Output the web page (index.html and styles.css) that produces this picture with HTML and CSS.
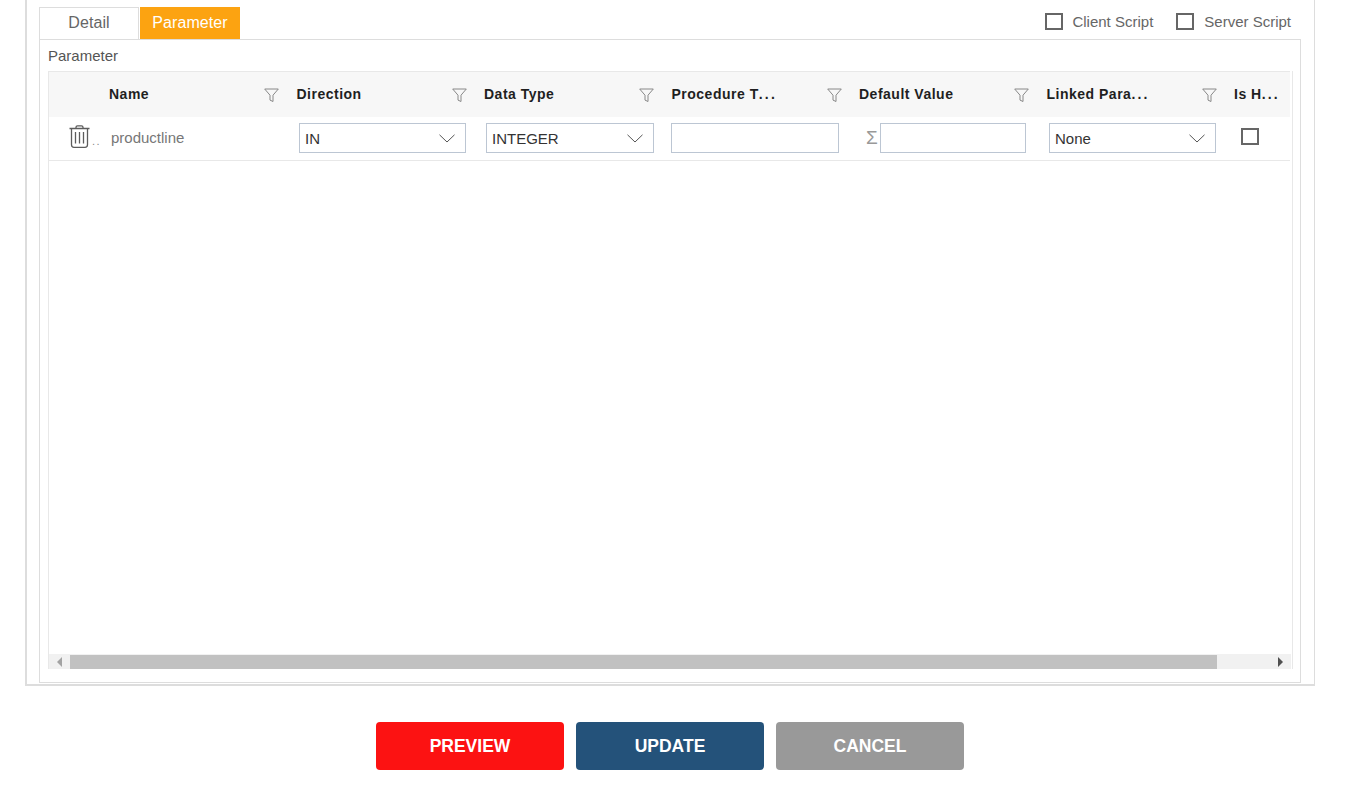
FILE: index.html
```html
<!DOCTYPE html>
<html lang="en">
  <head>
    <meta charset="utf-8">
    <title>Parameter</title>
    <link rel="stylesheet" href="styles.css">
  </head>
  <body>
    <div class='panel'>
        <div class='tabbar'>
            <div class='tab'>Detail</div>
            <div class='tab active'>Parameter</div>
            <div class='options'>
                <label class='option'><span class='check'></span>Client Script</label>
                <label class='option'><span class='check'></span>Server Script</label>
            </div>
        </div>
        <div class='tabbody'>
            <div class='caption'>Parameter</div>
            <div class='grid'>
                <div class='head'>
                    <div></div>
                    <div class='th'><span>Name</span><svg class='filter' viewBox='0 0 15 15'><path d='M.7 1h13.6L9 7.2v6.3l-3-1.4V7.2z'/></svg></div>
                    <div class='th'><span>Direction</span><svg class='filter' viewBox='0 0 15 15'><path d='M.7 1h13.6L9 7.2v6.3l-3-1.4V7.2z'/></svg></div>
                    <div class='th'><span>Data Type</span><svg class='filter' viewBox='0 0 15 15'><path d='M.7 1h13.6L9 7.2v6.3l-3-1.4V7.2z'/></svg></div>
                    <div class='th'><span>Procedure T<span class='more'>...</span></span><svg class='filter' viewBox='0 0 15 15'><path d='M.7 1h13.6L9 7.2v6.3l-3-1.4V7.2z'/></svg></div>
                    <div class='th'><span>Default Value</span><svg class='filter' viewBox='0 0 15 15'><path d='M.7 1h13.6L9 7.2v6.3l-3-1.4V7.2z'/></svg></div>
                    <div class='th'><span>Linked Para<span class='more'>...</span></span><svg class='filter' viewBox='0 0 15 15'><path d='M.7 1h13.6L9 7.2v6.3l-3-1.4V7.2z'/></svg></div>
                    <div class='th'><span>Is H<span class='more'>...</span></span></div>
                </div>
                <div class='row'>
                    <div class='td tools'>
                        <svg class='trash' viewBox='0 0 21 23'>
                            <path d='M.5 3.5h20M7 3.5V2.2C7 1.3 7.7.8 8.5.8h4c.8 0 1.5.5 1.5 1.4v1.3'/>
                            <path d='M2.5 3.5v16.3c0 1.5 1 2.5 2.5 2.5h11c1.5 0 2.5-1 2.5-2.5V3.5'/>
                            <path d='M6.5 7v11.5M10.5 7v11.5M14.5 7v11.5'/>
                        </svg>
                        <span class='dots'>..</span>
                    </div>
                    <div class='td name'>productline</div>
                    <div class='td'><div class='select'>IN<svg class='chevron' viewBox='0 0 16 9'><path d='M.5.8 8 8 15.5.8'/></svg></div></div>
                    <div class='td dtype'><div class='select'>INTEGER<svg class='chevron' viewBox='0 0 16 9'><path d='M.5.8 8 8 15.5.8'/></svg></div></div>
                    <div class='td proc'><div class='input'></div></div>
                    <div class='td def'><span class='sigma'>Σ</span><div class='input'></div></div>
                    <div class='td'><div class='select'>None<svg class='chevron' viewBox='0 0 16 9'><path d='M.5.8 8 8 15.5.8'/></svg></div></div>
                    <div class='td hid'><span class='check'></span></div>
                </div>
                <div class='empty'></div>
                <div class='scrollbar'>
                    <div class='arrow'><span class='tri left'></span></div>
                    <div class='thumb'></div>
                    <div class='rest'></div>
                    <div class='arrow'><span class='tri right'></span></div>
                </div>
            </div>
        </div>
    </div>
    <div class='actions'>
        <button class='btn red'>PREVIEW</button>
        <button class='btn blue'>UPDATE</button>
        <button class='btn grey'>CANCEL</button>
    </div>
  </body>
</html>
```

FILE: styles.css
```css
* {
    box-sizing: border-box;
}
body, html {
    height: 100%;
    overflow: hidden;
}
body {
    margin: 0;
    background: #fff;
    color: #4d4d4d;
    font: 15px/20px 'Liberation Sans', Arial, sans-serif;
}
.panel {
    width: 1290px;
    height: 686px;
    margin-left: 25px;
    padding: 7px 13px 1px 12px;
    border: solid 2px #ddd;
    border-width: 0 1px 2px 2px;
    display: flex;
    flex-direction: column;
}
.tabbar {
    display: flex;
    height: 32px;
    flex: none;
}
.tab {
    width: 100px;
    height: 32px;
    margin-right: 1px;
    border: solid 1px #ddd;
    border-bottom: 0;
    color: #666;
    font-size: 16px;
    letter-spacing: 0.1px;
    line-height: 30px;
    text-align: center;
}
.tab.active {
    background: #fca311;
    border-color: #fca311;
    color: #fff;
}
.options {
    margin-left: auto;
    padding-right: 10px;
    display: flex;
    gap: 23px;
}
.option {
    display: flex;
    height: 29px;
    align-items: center;
    gap: 10px;
    color: #666;
}
.option:first-child {
    gap: 9px;
}
.check {
    display: block;
    width: 18px;
    height: 17px;
    border: solid 2px #666;
    background: #fff;
}
.tabbody {
    flex: 1;
    border: solid 1px #ddd;
    padding: 6px 7px 13px 8px;
    display: flex;
    flex-direction: column;
}
.caption {
    height: 25px;
    color: #555;
}
.grid {
    flex: 1;
    border: solid 1px #e8e8e8;
    border-width: 0 1px;
    display: flex;
    flex-direction: column;
}
.head, .row {
    display: grid;
    grid-template-columns: 54px 187.5px 187.5px 187.5px 187.5px 187.5px 187.5px 60px;
    width: 1241px;
    flex: none;
}
.head {
    height: 46px;
    background: #f7f7f7;
    border-top: solid 1px #e8e8e8;
}
.th {
    display: flex;
    align-items: center;
    justify-content: space-between;
    padding: 0 11.5px 2px 6px;
    color: #1f1f1f;
    font-size: 14px;
    font-weight: bold;
    letter-spacing: 0.5px;
    white-space: nowrap;
}
.more {
    letter-spacing: 2.2px;
}
.filter {
    width: 15px;
    height: 15px;
    margin-top: 4px;
    fill: none;
    stroke: #888;
    stroke-width: 1;
}
.row {
    height: 44px;
    border-bottom: solid 1px #e8e8e8;
}
.td {
    display: flex;
    align-items: center;
    padding: 0 0 1px 8.5px;
}
.tools {
    padding-left: 20px;
    align-items: flex-start;
    padding-top: 8px;
}
.trash {
    width: 21px;
    height: 23px;
    fill: none;
    stroke: #5c5c5c;
    stroke-width: 1.3;
}
.dots {
    margin: 6px 0 0 2px;
    font-size: 11px;
    letter-spacing: 1.5px;
    color: #888;
}
.name {
    padding-left: 8px;
    padding-bottom: 2px;
    color: #777;
}
.select, .input {
    height: 30px;
    border: solid 1px #bcc6d3;
    background: #fff;
}
.select {
    width: 167px;
    padding: 1px 0 0 5px;
    display: flex;
    align-items: center;
    justify-content: space-between;
    color: #333;
}
.td.dtype {
    padding-left: 8px;
}
.dtype .select {
    width: 168px;
}
.chevron {
    width: 16px;
    height: 9px;
    margin-right: 10px;
    fill: none;
    stroke: #555;
    stroke-width: 1;
}
.td.proc {
    padding-left: 5.5px;
}
.proc .input {
    width: 168px;
}
.td.def {
    padding-left: 13px;
}
.sigma {
    width: 14px;
    color: #999;
    font-size: 19px;
    flex: none;
}
.def .input {
    width: 146px;
}
.td.hid {
    padding: 0 0 4px 13px;
}
.empty {
    flex: 1;
}
.scrollbar {
    height: 15px;
    flex: none;
    display: flex;
    margin-right: 1px;
    background: #f1f1f1;
    padding-top: 1px;
}
.arrow {
    width: 21px;
    display: flex;
    align-items: center;
    justify-content: center;
}
.thumb {
    width: 1147px;
    background: #c1c1c1;
}
.rest {
    flex: 1;
}
.tri {
    width: 0;
    height: 0;
    border-style: solid;
    border-color: transparent;
    border-width: 5px 0;
}
.tri.left {
    border-right: solid 5px #a3a3a3;
}
.tri.right {
    border-left: solid 5px #505050;
}
.actions {
    width: 1290px;
    margin: 36px 0 0 25px;
    display: flex;
    justify-content: center;
    gap: 12px;
}
.btn {
    width: 188px;
    height: 48px;
    border: 0;
    border-radius: 4px;
    color: #fff;
    font: bold 17.5px 'Liberation Sans', Arial, sans-serif;
}
.red {
    background: #fc1212;
}
.blue {
    background: #24527a;
}
.grey {
    background: #999;
}
```
